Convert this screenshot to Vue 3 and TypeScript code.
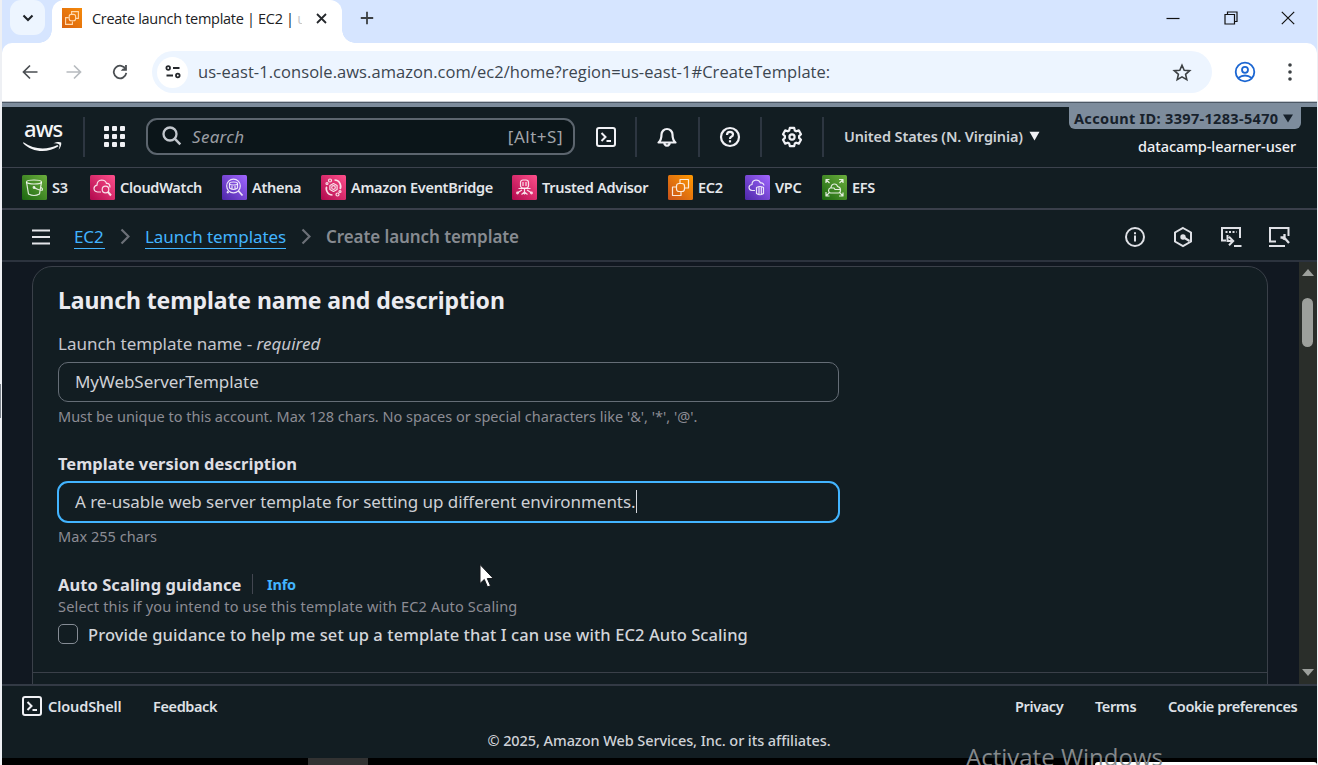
<script setup lang="ts">
interface Service {
  name: string
  icon: string
  from: string
  to: string
}

const services: Service[] = [
  { name: 'S3', icon: 's3', from: '#1b660f', to: '#6cae3e' },
  { name: 'CloudWatch', icon: 'watch', from: '#b0084d', to: '#ff4f8b' },
  { name: 'Athena', icon: 'athena', from: '#4d27a8', to: '#a166ff' },
  { name: 'Amazon EventBridge', icon: 'bridge', from: '#b0084d', to: '#ff4f8b' },
  { name: 'Trusted Advisor', icon: 'advisor', from: '#b0084d', to: '#ff4f8b' },
  { name: 'EC2', icon: 'ec2', from: '#c8511b', to: '#ff9900' },
  { name: 'VPC', icon: 'vpc', from: '#4d27a8', to: '#a166ff' },
  { name: 'EFS', icon: 'efs', from: '#1b660f', to: '#6cae3e' },
]

const templateName = 'MyWebServerTemplate'
const description = 'A re-usable web server template for setting up different environments.'
const dots = [0, 1, 2, 3, 4, 5, 6, 7, 8]
</script>

<template>
  <div class="screen">
    <div class="browser">
      <div class="tabstrip">
        <div class="tab-search">
          <svg width="12" height="8" viewBox="0 0 12 8"><path d="M1.5 1.5 6 6l4.5-4.5" fill="none" stroke="#1f2328" stroke-width="2.1" /></svg>
        </div>
        <div class="tab">
          <svg class="favicon" width="20" height="20" viewBox="0 0 25 25">
            <defs><linearGradient id="fav" x1="0" y1="1" x2="1" y2="0"><stop offset="0" stop-color="#d9620f" /><stop offset="1" stop-color="#f58a0a" /></linearGradient></defs>
            <rect width="25" height="25" fill="url(#fav)" />
            <g fill="none" stroke="#ffd9ae" stroke-width="1.4"><rect x="9" y="8" width="8" height="8" rx="2.500" /><path d="M12 7.500V4.500h8.500V13H17.500M8.500 12H4.500v8.500H13V17" /></g>
          </svg>
          <span class="tab-title">Create launch template | EC2 | <i>u</i></span>
          <svg class="tab-close" width="11" height="11" viewBox="0 0 11 11"><path d="m1 1 9 9M10 1l-9 9" stroke="#25282c" stroke-width="1.8" /></svg>
        </div>
        <svg class="newtab" width="14" height="14" viewBox="0 0 14 14"><path d="M7 .8v12.4M.8 7h12.4" stroke="#3c4043" stroke-width="1.8" /></svg>
        <div class="window-controls">
          <svg width="14" height="14" viewBox="0 0 14 14"><path d="M.5 7.5h13" stroke="#111" stroke-width="1.2" /></svg>
          <svg width="14" height="14" viewBox="0 0 14 14"><path d="M1 3.5h9.500V13H1zM3.500 3.500V1H13v9.500h-2.500" fill="none" stroke="#111" stroke-width="1.200" /></svg>
          <svg width="14" height="14" viewBox="0 0 14 14"><path d="m.8.8 12.400 12.400M13.200.8.8 13.200" stroke="#111" stroke-width="1.200" /></svg>
        </div>
      </div>
      <div class="toolbar">
        <svg class="nav-back" width="16" height="16" viewBox="0 0 16 16"><path d="M15.500 8H2M8 1.500 1.500 8 8 14.500" fill="none" stroke="#4a4e52" stroke-width="1.700" /></svg>
        <svg class="nav-fwd" width="16" height="16" viewBox="0 0 16 16"><path d="M.5 8H14M8 1.500 14.500 8 8 14.500" fill="none" stroke="#b7bbbf" stroke-width="1.700" /></svg>
        <svg class="nav-reload" width="16" height="16" viewBox="0 0 17 17"><path d="M14.600 5.600A6.700 6.700 0 1 0 15.200 9.500" fill="none" stroke="#4a4e52" stroke-width="1.900" /><path d="M15.800 1v6.200H9.300l2.300-2.300H13.900V1z" fill="#4a4e52" /></svg>
        <div class="omnibox">
          <div class="site-info">
            <svg width="16" height="16" viewBox="0 0 16 16"><g fill="none" stroke="#25282c" stroke-width="1.800"><circle cx="3.200" cy="4" r="1.800" /><path d="M8 4h6.500M1.500 11.500H8" /><circle cx="12.800" cy="11.500" r="1.800" /></g></svg>
          </div>
          <span class="url">us-east-1.console.aws.amazon.com/ec2/home?region=us-east-1#CreateTemplate:</span>
          <svg class="star" width="20" height="19" viewBox="0 0 20 19"><path d="m10 2.200 2.200 5 5.500.5-4.100 3.600 1.200 5.400L10 13.900l-4.800 2.800 1.200-5.400-4.100-3.600 5.500-.5z" fill="none" stroke="#3c4043" stroke-width="1.600" /></svg>
        </div>
        <svg class="profile" width="22" height="22" viewBox="0 0 22 22"><g fill="none" stroke="#1b66d2" stroke-width="1.800"><circle cx="11" cy="11" r="9.300" /><circle cx="11" cy="8.800" r="3" /><path d="M4.200 17q6.800-5 13.600 0" /></g></svg>
        <svg class="kebab" width="4" height="18" viewBox="0 0 4 18"><g fill="#3c4043"><circle cx="2" cy="2" r="1.800" /><circle cx="2" cy="9" r="1.800" /><circle cx="2" cy="16" r="1.800" /></g></svg>
      </div>

      <div class="account-band"></div>
      <header class="aws-header">
        <div class="logo">
          <span>aws</span>
          <svg width="40" height="11" viewBox="0 0 40 11"><path d="M.5 1.200C11 8.800 24 9 34.500 4l1 1.300C25 12.300 9 11.800 0 2z" fill="#f4f5f7" /><path d="M30.500 2.300c3-1.600 6.300-1.800 7.700-.8.4 2-.5 5.200-2.600 7.200.8-2.300 1.300-4.300.6-5.200-.8-.9-3.100-1-5.700-1.200z" fill="#f4f5f7" /></svg>
        </div>
        <i class="sep sep-first"></i>
        <div class="apps"><b v-for="d in dots" :key="d"></b></div>
        <div class="search">
          <svg width="20" height="20" viewBox="0 0 20 20"><circle cx="8" cy="8" r="6.500" fill="none" stroke="#c2c7cd" stroke-width="2.300" /><path d="m12.700 12.700 5.600 5.600" stroke="#c2c7cd" stroke-width="2.500" /></svg>
          <em>Search</em><span>[Alt+S]</span>
        </div>
        <div class="tools">
          <div class="tool tool-shell"><svg width="22" height="22" viewBox="0 0 22 22"><g fill="none" stroke="#f0f1f5" stroke-width="2"><rect x="2" y="2" width="18" height="18" rx="2" /><path d="m6.500 7 4 4-4 4M11.500 15H16" /></g></svg></div>
          <div class="tool"><svg width="22" height="22" viewBox="0 0 22 22"><g fill="none" stroke="#f0f1f5" stroke-width="2.200" stroke-linejoin="round"><path d="M2.500 16.500q3-2.500 3-8a5.500 5.500 0 0 1 11 0q0 5.500 3 8z" /><path d="M8.500 17v1q2.500 3.500 5 0v-1" /></g></svg></div>
          <div class="tool"><svg width="22" height="22" viewBox="0 0 22 22"><g fill="none" stroke="#f0f1f5" stroke-width="2.200"><circle cx="11" cy="11" r="9" /><path d="M8 9q0-3.200 3-3.200t3 2.700q0 1.500-1.700 2.300-1.300.6-1.300 2.200" /></g><rect x="9.900" y="14.200" width="2.200" height="2.200" fill="#f0f1f5" /></svg></div>
          <div class="tool"><svg width="22" height="22" viewBox="0 0 22 22"><g fill="none" stroke="#f0f1f5" stroke-width="2.200" stroke-linejoin="round"><path d="M8.800 1.900h4.400l.6 2.600 1.400.8 2.600-.9 2.200 3.800-1.900 1.900v1.800l1.900 1.900-2.200 3.800-2.600-.9-1.400.8-.6 2.600H8.800l-.6-2.600-1.400-.8-2.600.9L2 13.800l1.900-1.900v-1.800L2 8.200l2.200-3.800 2.600.9 1.400-.8z" /><circle cx="11" cy="11" r="2.600" /></g></svg></div>
        </div>
        <div class="region"><span>United States (N. Virginia)</span><svg width="11" height="10" viewBox="0 0 11 10"><path d="M.5.700h10L5.500 9.500z" fill="#f0f1f5" /></svg></div>
        <div class="account">
          <div class="account-id"><span>Account ID: 3397-1283-5470</span><svg width="10" height="9" viewBox="0 0 10 9"><path d="M0 .5h10L5 8.500z" fill="#16202a" /></svg></div>
          <div class="user">datacamp-learner-user</div>
        </div>
      </header>

      <nav class="services">
        <div v-for="s in services" :key="s.name" class="service">
          <svg width="25" height="25" viewBox="0 0 25 25">
            <defs><linearGradient :id="s.icon" x1="0" y1="1" x2="1" y2="0"><stop offset="0" :stop-color="s.from" /><stop offset="1" :stop-color="s.to" /></linearGradient></defs>
            <rect width="25" height="25" rx="1.500" :fill="`url(#${s.icon})`" />
            <g fill="none" stroke="#fff" stroke-opacity=".85" stroke-width="1.200" stroke-linejoin="round">
              <template v-if="s.icon === 's3'"><ellipse cx="12" cy="7" rx="7.500" ry="2" /><path d="M4.500 7 6.500 19q5.500 3 11 0L19.500 7M12 12.500q6 3.500 8.500 2.500.5-1.500-2-3" /><circle cx="12" cy="12.500" r=".8" /></template>
              <template v-else-if="s.icon === 'watch'"><path d="M11 17H7.500Q4 16.500 4 13.500q0-2.500 3-3.300Q7 5.500 11.500 5q4 0 5 3.500 3.500-.5 3.500 4" /><circle cx="15.500" cy="14.500" r="3.300" /><path d="m18 17 3 3.500" stroke-width="2" /></template>
              <template v-else-if="s.icon === 'athena'"><circle cx="11.500" cy="11" r="6.800" /><ellipse cx="11.500" cy="8.500" rx="4" ry="1.500" /><path d="M7.500 8.500v4.500q4 2.800 8 0V8.500M10 11v3M13 11v3" /><path d="m16.500 16 4 4.500M5 16.500l1.500 1.500" stroke-width="1.800" /></template>
              <template v-else-if="s.icon === 'bridge'"><circle cx="12.500" cy="12.500" r="1.800" /><path d="m12.500 8.500 3.600 2v4l-3.600 2-3.600-2v-4z" /><circle cx="9" cy="5.500" r="1.500" /><circle cx="16.500" cy="19.500" r="1.500" /><circle cx="6" cy="8.500" r="1" /><circle cx="19" cy="16.500" r="1" /><path d="M13.500 5q4 0 5.500 3.500t0 5.500M11.500 20q-4 0-5.500-3.500t0-4.500" stroke-width="1.700" /></template>
              <template v-else-if="s.icon === 'advisor'"><rect x="8.500" y="5" width="8" height="8" rx="2.500" /><path d="M12.500 13v6.500M6.500 13.500h12M10 15l-4 2.500M15 15l4 2.500M9.500 19.500l3-2.500 3 2.500M11 7v4M14 7v4" /><circle cx="5.500" cy="18" r=".8" /><circle cx="19.500" cy="18" r=".8" /></template>
              <template v-else-if="s.icon === 'ec2'"><rect x="8.500" y="8.500" width="8" height="8" rx="2.500" /><path d="M12 8V4.500h8.500V13H17M8 12H4.500v8.500H13V17" /></template>
              <template v-else-if="s.icon === 'vpc'"><path d="M10 15.500H7Q4 15 4 12.500T7 9.500Q7 5.500 11 5q3.500 0 4.500 3 3-.5 3.500 2.500" /><path d="M11.500 12.500q3.500-2 7 0v6q-3.500 2.500-7 0zM14 12v7.500M16.300 12v7.500" /></template>
              <template v-else><path d="M8.500 18q-2-.5-2-2.500t2.500-3q.5-3.500 3.500-3.500 2.500 0 3 2.500 3 .5 3 3.500t-2 3zM8 13h4l1 1.500h5M7.500 8 4.500 5M4 8V4.500h3.500M17.500 8l3-3M17 4.500h4V8M7 18l-2.500 2.500M4 17v4h3.500M18 18l2.500 2.500M17 21h4v-3.500" /></template>
            </g>
          </svg>
          <span>{{ s.name }}</span>
        </div>
      </nav>

      <div class="crumbs">
        <svg class="menu" width="18" height="16" viewBox="0 0 18 16"><path d="M0 1.500h18M0 8h18M0 14.500h18" stroke="#e3e5e9" stroke-width="2" /></svg>
        <a class="crumb-ec2">EC2</a>
        <svg class="chev" width="10" height="17" viewBox="0 0 10 17"><path d="m1.500 1.500 7 7-7 7" fill="none" stroke="#6c7078" stroke-width="2.200" /></svg>
        <a class="crumb-lt">Launch templates</a>
        <svg class="chev" width="10" height="17" viewBox="0 0 10 17"><path d="m1.500 1.500 7 7-7 7" fill="none" stroke="#6c7078" stroke-width="2.200" /></svg>
        <strong>Create launch template</strong>
        <div class="panel-icons">
          <svg width="22" height="22" viewBox="0 0 22 22"><circle cx="11" cy="11" r="9" fill="none" stroke="#dfe1e6" stroke-width="2" /><path d="M11 9.500v6M11 6.300v2" stroke="#dfe1e6" stroke-width="2" /></svg>
          <svg width="22" height="22" viewBox="0 0 22 22"><path d="m11 2 8 4.500v9L11 20l-8-4.500v-9z" fill="none" stroke="#dfe1e6" stroke-width="2" /><circle cx="11" cy="11" r="2.700" fill="#dfe1e6" /><path d="m11 11 6.500 4" stroke="#dfe1e6" stroke-width="2.200" /></svg>
          <svg width="22" height="22" viewBox="0 0 22 22"><g fill="none" stroke="#dfe1e6" stroke-width="2"><path d="M6 14.500H2V2h18v10M14 20h7.500M7.500 9v6h5M9 10.800l4.200 4.200L9 19.200" /><path d="M5.500 6h11" stroke-dasharray="2 1.500" /></g><path d="M2 14.500V9" stroke="#121d22" stroke-width="0" /></svg>
          <svg width="22" height="22" viewBox="0 0 22 22"><g fill="none" stroke="#dfe1e6" stroke-width="2"><path d="M8 15.500H2V2h18.500v8M1 20h16" /><path d="M16.500 8v3.500H12.500M14.500 11.500q1.500 2 3 1.500l3.500 4" stroke-width="2.300" /></g></svg>
        </div>
      </div>

      <div class="content">
        <main class="page">
          <section class="card">
            <h2>Launch template name and description</h2>
            <label class="label name-label">Launch template name - <em>required</em></label>
            <div class="input">{{ templateName }}</div>
            <p class="hint hint-name">Must be unique to this account. Max 128 chars. No spaces or special characters like '&amp;', '*', '@'.</p>
            <label class="label version-label">Template version description</label>
            <div class="input focused"><span>{{ description }}</span><i class="caret"></i></div>
            <p class="hint hint-max">Max 255 chars</p>
            <div class="guidance"><strong>Auto Scaling guidance</strong><i></i><a>Info</a></div>
            <p class="hint hint-select">Select this if you intend to use this template with EC2 Auto Scaling</p>
            <div class="check"><b></b><span>Provide guidance to help me set up a template that I can use with EC2 Auto Scaling</span></div>
            <div class="rule"></div>
          </section>
        </main>
        <aside class="scrollbar">
          <svg width="12" height="7" viewBox="0 0 12 7"><path d="M0 7 6 0l6 7z" fill="#9da09c" /></svg>
          <div class="thumb"></div>
          <svg class="down" width="12" height="7" viewBox="0 0 12 7"><path d="m0 0 6 7 6-7z" fill="#9da09c" /></svg>
        </aside>
      </div>

      <footer class="footer">
        <div class="links">
          <svg width="22" height="22" viewBox="0 0 22 22"><g fill="none" stroke="#f0f1f5" stroke-width="2"><rect x="2" y="2" width="18" height="18" rx="2" /><path d="m6.500 7 4 4-4 4M11.500 15H16" /></g></svg>
          <span class="shell">CloudShell</span><span class="feedback">Feedback</span>
          <span class="privacy">Privacy</span><span class="terms">Terms</span><span class="cookies">Cookie preferences</span>
        </div>
        <p>© 2025, Amazon Web Services, Inc. or its affiliates.</p>
      </footer>
      <div class="taskbar"><i></i><b></b></div>
    </div>
    <div class="edge-handle"></div>
    <svg class="pointer" width="16" height="26" viewBox="0 0 16 26"><path d="M1 1.500v19l4.300-4 3.200 7.500 3-1.300-3.200-7.200h6z" fill="#fff" stroke="#15191d" stroke-width="1" /></svg>
    <div class="watermark">Activate Windows</div>
  </div>
</template>

<style>
html, body { margin: 0; overflow: hidden; background: #fff; }
</style>

<style scoped>
.screen { position: relative; width: 1318px; height: 765px; overflow: hidden; box-sizing: border-box; padding: 0 1px 0 2px; background: #eef0f4; font-family: "Noto Sans", sans-serif; color: #d5d8dd; }
.screen * { box-sizing: border-box; }
svg { display: block; flex: none; }
span, strong, a, em { white-space: nowrap; }
.browser { width: 1315px; height: 765px; display: flex; flex-direction: column; background: #121d22; }
.browser > * { flex: none; }

.tabstrip { height: 43px; background: #d6e5ff; display: flex; position: relative; z-index: 1; }
.tab-search { width: 35px; height: 35px; margin-left: 8px; background: #edf5ff; border-radius: 11px; display: flex; align-items: center; justify-content: center; }
.tab { position: relative; width: 290px; height: 43px; margin-left: 7px; background: #fff; border-radius: 12px 12px 0 0; display: flex; align-items: center; padding: 0 0 7px 10px; }
.tab::before, .tab::after { content: ""; position: absolute; bottom: 0; width: 13px; height: 13px; }
.tab::before { left: -13px; background: radial-gradient(circle at 0 0, transparent 12.500px, #fff 13px); }
.tab::after { right: -13px; background: radial-gradient(circle at 100% 0, transparent 12.500px, #fff 13px); }
.tab-title { width: 210px; margin-left: 10px; overflow: hidden; font: 14.500px/24px "Open Sans", sans-serif; letter-spacing: -.3px; color: #202124; padding-top: 2px; }
.tab-title i { font-style: normal; color: #c8c8c8; }
.tab-close { margin-left: 14px; }
.newtab { margin: 11px 0 0 18px; }
.window-controls { margin-left: auto; display: flex; gap: 43.500px; padding: 11px 22px 0 0; }
.toolbar { height: 59px; background: #fff; border-bottom: 1px solid #c4c9cf; display: flex; align-items: center; border-radius: 10px 10px 0 0; box-shadow: 0 -10px 0 0 #d6e5ff; }
.nav-back { margin-left: 19.500px; }
.nav-fwd { margin-left: 28px; }
.nav-reload { margin-left: 30px; }
.omnibox { margin-left: 24.500px; width: 1060px; height: 42px; border-radius: 21px; background: #edf5ff; display: flex; align-items: center; padding-left: 5px; }
.site-info { width: 31px; height: 31px; border-radius: 50%; background: #fff; display: flex; align-items: center; justify-content: center; }
.url { margin-left: 10px; font: 16.500px/24px "Open Sans", sans-serif; letter-spacing: .055px; color: #3c4650; }
.star { margin-left: auto; margin-right: 20px; }
.profile { margin-left: 21.500px; }
.kebab { margin-left: 32px; }

.account-band { height: 5px; background: #7d8c9c; border-top: 1px solid #4c5865; }
.aws-header { height: 61px; background: #121d22; border-bottom: 1px solid #3c424d; display: flex; align-items: center; padding-bottom: 1px; }
.logo { width: 40px; margin-left: 21px; height: 32px; margin-bottom: 2px; }
.logo span { display: block; height: 21px; font: 500 22px/17px "Noto Sans", sans-serif; letter-spacing: -.9px; color: #f4f5f7; padding-left: 1px; }
.sep { width: 2px; height: 40px; background: #2d3641; }
.sep-first { margin-left: 20px; }
.apps { margin-left: 19px; display: grid; grid-template-columns: repeat(3, 5px); gap: 3px; width: 21px; }
.apps b { height: 5px; border-radius: 1px; background: #f0f1f5; }
.search { margin-left: 21px; width: 429px; height: 37px; border: 2px solid #5c656e; border-radius: 11px; background: #0b1519; display: flex; align-items: center; padding: 0 10px 1px 14px; font-size: 17px; color: #a1a4aa; }
.search em { margin-left: 10px; color: #9a9da3; letter-spacing: .3px; }
.search span { margin-left: auto; letter-spacing: .5px; }
.tools { display: flex; }
.tool { width: 62.250px; height: 40px; border-right: 2px solid #2d3641; display: flex; align-items: center; justify-content: center; }
.tool-shell { padding-left: 1.500px; }
.region { margin-left: 20px; display: flex; align-items: center; width: 196px; padding-bottom: 1px; justify-content: space-between; font-size: 14.500px; font-weight: 600; color: #cdd1d6; letter-spacing: -.12px; }
.account { margin-left: auto; align-self: flex-start; width: 232px; margin-right: 16px; }
.account-id { height: 22px; background: #7d8c9c; border-radius: 0 0 6px 6px; display: flex; align-items: center; justify-content: space-between; padding: 0 8px 0 5px; color: #17212b; font-size: 14.500px; font-weight: 700; letter-spacing: .33px; }
.user { text-align: right; padding-right: 5px; height: 34px; line-height: 34px; font-size: 14.500px; font-weight: 500; letter-spacing: -.07px; color: #f0f1f5; }

.services { height: 42px; border-bottom: 2px solid #3a3f4b; display: grid; grid-template-columns: 68px 132px 99px 191px 156px 77px 77px 60px; padding: 0 0 1px 20px; }
.service { display: flex; align-items: center; gap: 5px; color: #e4e6ea; font-size: 14.500px; font-weight: 600; letter-spacing: -.3px; }
.service span { padding-bottom: 1px; }

.crumbs { height: 52px; border-bottom: 2px solid #2c333e; display: flex; align-items: center; padding-top: 3px; font-size: 17px; }
.menu { margin-left: 30px; margin-right: 24px; }
.crumbs a { color: #42b4ff; border-bottom: 1px solid #42b4ff; line-height: 22px; letter-spacing: -.08px; margin-top: 1px; }
.crumb-ec2 { width: 31px; }
.chev { margin-left: 15px; margin-right: 15px; }
.crumb-lt { width: 141px; }
.crumbs strong { font-weight: 600; letter-spacing: -.08px; color: #878b91; }
.panel-icons { margin-left: auto; display: flex; gap: 25.700px; padding-right: 27.500px; }

.content { height: 422px; background: #111821; display: flex; overflow: hidden; }
.page { width: 1297px; padding: 4px 0 0 30px; }
.card { width: 1236px; height: 460px; border: 1px solid #3a4049; border-radius: 20px; background: #121d22; }
.card > * { margin-left: 25px; }
h2 { margin: 0; height: 68px; line-height: 67px; font-size: 23px; font-weight: 700; letter-spacing: -.09px; color: #ebebf0; white-space: nowrap; }
.label { display: block; height: 27px; line-height: 18px; font-size: 17px; color: #c6c6cd; white-space: nowrap; }
.input { width: 781px; height: 40px; border: 1px solid #656d76; border-radius: 10px; padding-left: 16px; padding-bottom: 1px; display: flex; align-items: center; font-size: 17px; letter-spacing: -.05px; color: #ced0d5; }
.hint { margin-top: 0; margin-bottom: 0; font-size: 14.500px; color: #8c8c94; white-space: nowrap; }
.hint-name { height: 52px; line-height: 28px; }
.version-label { font-weight: 700; font-size: 16.500px; line-height: 20px; color: #dedee3; }
.focused { width: 783px; height: 42px; margin-left: 24px; border: 2px solid #42b4ff; border-radius: 11px; }
.caret { width: 1px; height: 23px; background: #d5d8dd; }
.hint-max { height: 50px; line-height: 26px; letter-spacing: .05px; }
.guidance { height: 24px; display: flex; align-items: center; font-size: 16.500px; padding-bottom: 2px; }
.guidance strong { width: 184px; color: #dedee3; letter-spacing: .06px; }
.guidance i { width: 1px; height: 20px; margin-left: 10px; margin-right: 14px; background: #424650; }
.guidance a { font-size: 14.500px; font-weight: 700; color: #42b4ff; letter-spacing: -.2px; }
.hint-select { height: 20px; line-height: 18px; letter-spacing: .17px; }
.check { height: 35px; display: flex; align-items: center; gap: 10px; font-size: 16.500px; font-weight: 500; letter-spacing: .085px; color: #d3d5da; padding-bottom: 1px; }
.check b { width: 20px; height: 20px; border: 1px solid #858c95; border-radius: 5px; }
.rule { margin: 20px 0 0; height: 1px; background: #3a4049; }
.scrollbar { width: 18px; background: #2a2e2a; display: flex; flex-direction: column; align-items: center; padding: 7px 1px 8px 0; }
.thumb { width: 11px; height: 49px; margin-top: 22px; border-radius: 6px; background: #9da09c; }
.down { margin-top: auto; }

.footer { height: 74px; border-top: 2px solid #333a45; }
.links { height: 42px; display: flex; align-items: center; padding: 0 0 2px 19px; font-size: 14.500px; font-weight: 600; letter-spacing: -.38px; color: #dfe1e6; }
.shell { margin-left: 5px; width: 105px; letter-spacing: -.1px; }
.feedback { width: 862px; }
.privacy { width: 80px; }
.terms { width: 73px; }
.footer p { margin: 0; height: 26px; line-height: 24px; text-align: center; font-size: 14.500px; font-weight: 500; letter-spacing: -.08px; padding-right: 1px; color: #cfd2d7; }
.taskbar { height: 7px; background: #000; display: flex; }
.taskbar i { width: 60px; margin-left: 306px; background: #323232; }
.taskbar b { width: 222px; height: 3px; margin: 4px 0 0 auto; background: #fff; border-radius: 3px 3px 0 0; }
.edge-handle { position: absolute; left: 0; top: 384px; width: 1px; height: 34px; background: #7b828b; }
.pointer { position: absolute; left: 479px; top: 563px; }
.watermark { position: absolute; left: 966px; top: 741px; font: 24px/32px "Open Sans", sans-serif; color: #85898c; white-space: nowrap; }
</style>
